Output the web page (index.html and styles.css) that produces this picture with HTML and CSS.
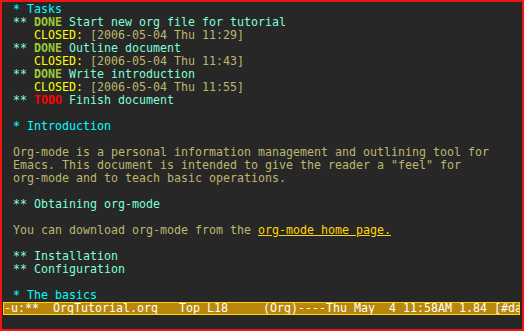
FILE: index.html
```html
<!DOCTYPE html>
<html>
<head>
<meta charset="utf-8">
<link rel="stylesheet" href="styles.css">
</head>
<body>
<div class="frame">
  <div class="buffer">
    <div class="line"><span class="h1">* Tasks</span></div>
    <div class="line"><span class="h2">** </span><span class="done">DONE</span><span class="h2"> Start new org file for tutorial</span></div>
    <div class="line">   <span class="closed">CLOSED:</span> <span class="date">[2006-05-04 Thu 11:29]</span></div>
    <div class="line"><span class="h2">** </span><span class="done">DONE</span><span class="h2"> Outline document</span></div>
    <div class="line">   <span class="closed">CLOSED:</span> <span class="date">[2006-05-04 Thu 11:43]</span></div>
    <div class="line"><span class="h2">** </span><span class="done">DONE</span><span class="h2"> Write introduction</span></div>
    <div class="line">   <span class="closed">CLOSED:</span> <span class="date">[2006-05-04 Thu 11:55]</span></div>
    <div class="line"><span class="h2">** </span><span class="todo">TODO</span><span class="h2"> Finish document</span></div>
    <div class="line"> </div>
    <div class="line"><span class="h1">* Introduction</span></div>
    <div class="line"> </div>
    <div class="line text">Org-mode is a personal information management and outlining tool for</div>
    <div class="line text">Emacs. This document is intended to give the reader a "feel" for</div>
    <div class="line text">org-mode and to teach basic operations.</div>
    <div class="line"> </div>
    <div class="line"><span class="h2">** Obtaining org-mode</span></div>
    <div class="line"> </div>
    <div class="line text">You can download org-mode from the <span class="link">org-mode home page.</span></div>
    <div class="line"> </div>
    <div class="line"><span class="h2">** Installation</span></div>
    <div class="line"><span class="h2">** Configuration</span></div>
    <div class="line"> </div>
    <div class="line"><span class="h1">* The basics</span></div>
  </div>
  <div class="modeline">-u:**  OrgTutorial.org   Top L18     (Org)----Thu May  4 11:58AM 1.84 [#data]</div>
  <div class="minibuffer"></div>
</div>
</body>
</html>
```
FILE: styles.css
```css
html, body {
  margin: 0;
  padding: 0;
  background: #272727;
}
.frame {
  box-sizing: border-box;
  width: 524px;
  height: 331px;
  border: 2px solid #f01414;
  background: #272727;
  overflow: hidden;
  font-family: "DejaVu Sans Mono", "Liberation Mono", monospace;
  font-size: 11.63px;
  display: flex;
  flex-direction: column;
}
.buffer {
  padding-top: 1px;
  padding-left: 11px;
}
.line {
  height: 13px;
  line-height: 13px;
  white-space: pre;
  overflow: hidden;
  color: #bdb76b;
}
.h1 { color: #00ffff; }
.h2 { color: #7fffd4; }
.done { color: #9acd32; font-weight: bold; }
.todo { color: #ff0000; font-weight: bold; }
.closed { color: #ffff00; }
.date { color: #bdb76b; }
.text { color: #bdb76b; }
.link { color: #ffd700; text-decoration: underline; }
.modeline {
  box-sizing: border-box;
  margin-left: 1px;
  width: 517px;
  height: 13px;
  border: 1px solid #ffd700;
  background: #b8860b;
  color: #ffffff;
  line-height: 11px;
  white-space: pre;
  overflow: hidden;
}
.minibuffer {
  flex: 1;
}
```
